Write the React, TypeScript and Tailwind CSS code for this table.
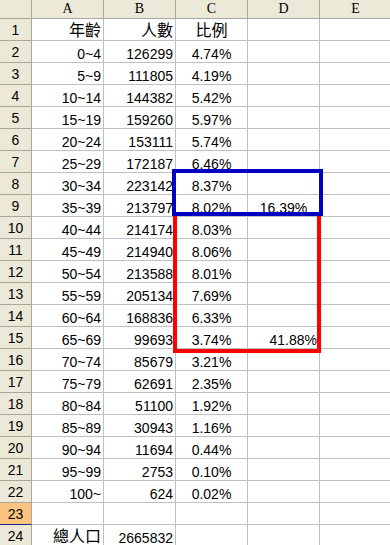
type Row = { a?: string; b?: string; c?: string; d?: string; dAlign?: 'center' | 'right'; cjk?: boolean };

// 年齡別人口資料（第1列為標題）
const ROWS: Row[] = [
  { a: '年齡', b: '人數', c: '比例', cjk: true },
  { a: '0~4', b: '126299', c: '4.74%' },
  { a: '5~9', b: '111805', c: '4.19%' },
  { a: '10~14', b: '144382', c: '5.42%' },
  { a: '15~19', b: '159260', c: '5.97%' },
  { a: '20~24', b: '153111', c: '5.74%' },
  { a: '25~29', b: '172187', c: '6.46%' },
  { a: '30~34', b: '223142', c: '8.37%' },
  { a: '35~39', b: '213797', c: '8.02%', d: '16.39%', dAlign: 'center' },
  { a: '40~44', b: '214174', c: '8.03%' },
  { a: '45~49', b: '214940', c: '8.06%' },
  { a: '50~54', b: '213588', c: '8.01%' },
  { a: '55~59', b: '205134', c: '7.69%' },
  { a: '60~64', b: '168836', c: '6.33%' },
  { a: '65~69', b: '99693', c: '3.74%', d: '41.88%', dAlign: 'right' },
  { a: '70~74', b: '85679', c: '3.21%' },
  { a: '75~79', b: '62691', c: '2.35%' },
  { a: '80~84', b: '51100', c: '1.92%' },
  { a: '85~89', b: '30943', c: '1.16%' },
  { a: '90~94', b: '11694', c: '0.44%' },
  { a: '95~99', b: '2753', c: '0.10%' },
  { a: '100~', b: '624', c: '0.02%' },
  {},
  { a: '總人口', b: '2665832' },
];

const COLS = ['A', 'B', 'C', 'D', 'E'];
const SELECTED_ROW = 23;

function Cell({ text, align, cjk }: { text?: string; align: 'right' | 'center'; cjk?: boolean }) {
  return (
    <div
      className={`h-[22px] border-r border-b border-[#c0c0c0] flex items-end px-[2px] overflow-hidden whitespace-nowrap ${
        align === 'right' ? 'justify-end' : 'justify-center'
      }`}
    >
      {text && (
        <span className={cjk ? 'text-[16px] leading-[16px] pb-px' : 'text-[14px] leading-[12px] pb-[2px]'}>{text}</span>
      )}
    </div>
  );
}

export default function App() {
  return (
    <div className="w-[390px] h-[545px] overflow-hidden bg-white text-black font-['Liberation_Sans','Noto_Sans_CJK_TC',sans-serif]">
      <div className="relative w-[392px]">
        <div className="grid grid-cols-[32px_72px_72px_72px_72px_72px]">
          {/* 欄標題 */}
          <div className="h-[19px] bg-[#ece9d8] border-r border-b border-[#aca899]" />
          {COLS.map((col) => (
            <div
              key={col}
              className="h-[19px] bg-[#ece9d8] border-r border-b border-[#aca899] flex items-center justify-center font-['Liberation_Serif',serif] text-[14px] leading-none"
            >
              {col}
            </div>
          ))}

          {ROWS.map((row, i) => {
            const n = i + 1;
            const selected = n === SELECTED_ROW;
            return (
              <div key={n} className="contents">
                <div
                  className={`h-[22px] border-r flex items-center justify-center text-[14px] leading-none pt-px ${
                    selected
                      ? 'bg-[#fcc47e] border-b border-b-[#1f2a80] border-r-[#aca899]'
                      : 'bg-[#ece9d8] border-b border-[#aca899]'
                  }`}
                >
                  {n}
                </div>
                <Cell text={row.a} align="right" cjk={row.cjk || n === 24} />
                <Cell text={row.b} align="right" cjk={row.cjk} />
                <Cell text={row.c} align="center" cjk={row.cjk} />
                <Cell text={row.d} align={row.dAlign ?? 'right'} />
                <Cell align="right" />
              </div>
            );
          })}
        </div>

        {/* 標註框 */}
        <div className="absolute left-[172px] top-[169px] w-[151px] h-[47px] border-4 border-[#0000c0]" />
        <div className="absolute left-[173px] top-[216px] w-[148px] h-[137px] border-4 border-t-0 border-[#ff0000]" />
      </div>
    </div>
  );
}
